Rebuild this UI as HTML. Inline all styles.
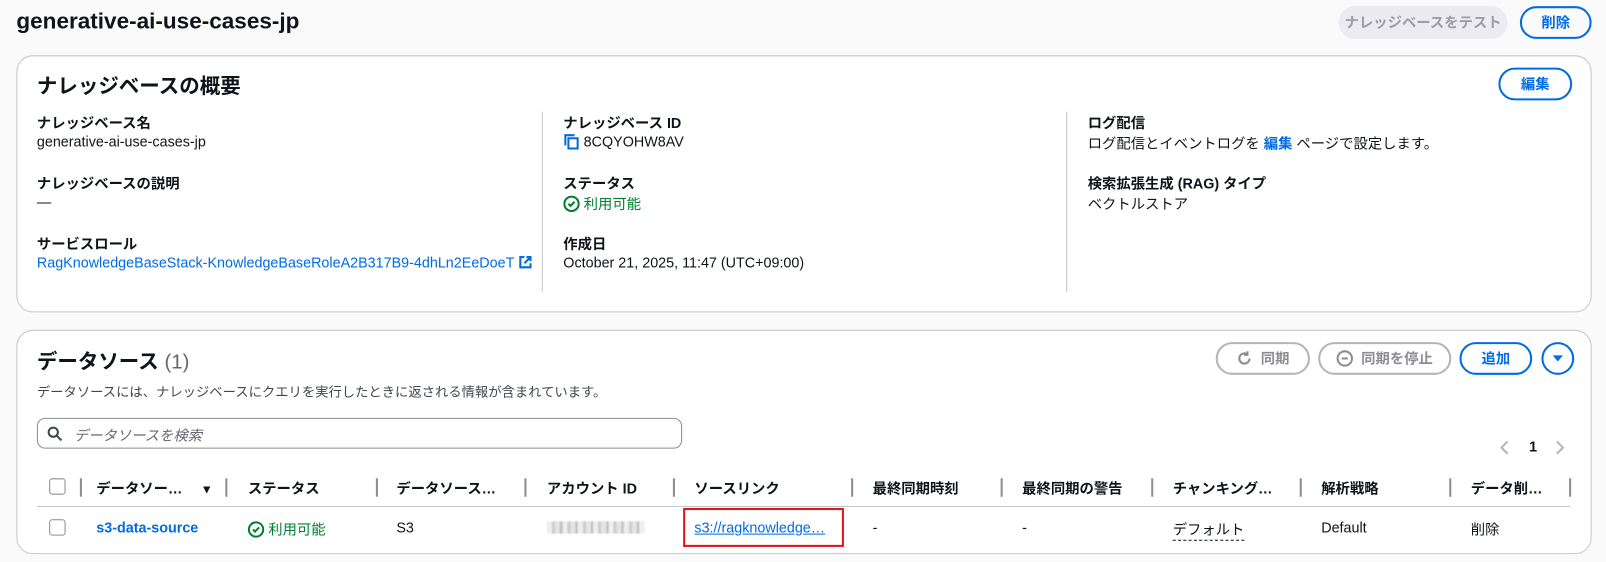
<!DOCTYPE html><html><head><meta charset="utf-8"><style>
body{margin:0;width:1606px;height:562px;background:#fafafa;font-family:"Liberation Sans","Noto Sans CJK JP",sans-serif;color:#0f141a;font-size:14px;position:relative;overflow:hidden}
#w{position:absolute;left:0;top:0;width:1568px;height:549px;transform:scale(1.0242);transform-origin:0 0}
.a{position:absolute;white-space:nowrap}
.card{position:absolute;background:#fff;border:1px solid #c6c6cd;border-radius:16px;box-sizing:border-box}
.b{font-weight:bold}
.lk{color:#006ce0}
.btn{position:absolute;border:2px solid #006ce0;border-radius:20px;box-sizing:border-box;color:#006ce0;font-weight:bold;font-size:14px;display:flex;align-items:center;justify-content:center}
.dis{border-color:#b4b4bb;color:#8c8c94}
.vl{position:absolute;width:1px;background:#c6c6cd}
.sep{position:absolute;width:2px;height:18px;background:#8c8c94;top:467px}
.g{color:#00802f}
</style></head><body><div id="w">
<div class="a b" style="left:16px;top:8px;font-size:22px">generative-ai-use-cases-jp</div>
<div class="btn dis" style="left:1307px;top:6px;width:165px;height:32px;background:#ebebf0;border-color:#ebebf0;color:#9c9ca4">ナレッジベースをテスト</div>
<div class="btn" style="left:1484px;top:6px;width:70px;height:32px">削除</div>

<div class="card" style="left:16px;top:54px;width:1538px;height:251px"></div>
<div class="a b" style="left:36px;top:68px;font-size:20px">ナレッジベースの概要</div>
<div class="btn" style="left:1463px;top:66px;width:72px;height:32px">編集</div>
<div class="vl" style="left:529px;top:109px;height:176px"></div>
<div class="vl" style="left:1041px;top:109px;height:176px"></div>
<div class="a b" style="left:36px;top:110px">ナレッジベース名</div>
<div class="a" style="left:36px;top:130px">generative-ai-use-cases-jp</div>
<div class="a b" style="left:36px;top:169px">ナレッジベースの説明</div>
<div class="a" style="left:36px;top:189px">—</div>
<div class="a b" style="left:36px;top:228px">サービスロール</div>
<div class="a lk" style="left:36px;top:248px">RagKnowledgeBaseStack-KnowledgeBaseRoleA2B317B9-4dhLn2EeDoeT <svg width="14" height="14" viewBox="0 0 14 14" style="vertical-align:-2px"><path d="M6 2H2v10h10V8M8 2h4v4M12 2L6 8" fill="none" stroke="#006ce0" stroke-width="2"/></svg></div>
<div class="a b" style="left:550px;top:110px">ナレッジベース ID</div>
<div class="a" style="left:550px;top:130px"><svg width="16" height="16" viewBox="0 0 16 16" style="vertical-align:-3px"><path d="M2 12V2h9M5 5h9v10H5z" fill="none" stroke="#006ce0" stroke-width="2"/></svg> 8CQYOHW8AV</div>
<div class="a b" style="left:550px;top:169px">ステータス</div>
<div class="a g" style="left:550px;top:189px"><svg width="16" height="16" viewBox="0 0 16 16" style="vertical-align:-3px"><circle cx="8" cy="8" r="7" fill="none" stroke="#00802f" stroke-width="2"/><path d="M5 8l2 2 4-4" fill="none" stroke="#00802f" stroke-width="2"/></svg> 利用可能</div>
<div class="a b" style="left:550px;top:228px">作成日</div>
<div class="a" style="left:550px;top:248px">October 21, 2025, 11:47 (UTC+09:00)</div>
<div class="a b" style="left:1062px;top:110px">ログ配信</div>
<div class="a" style="left:1062px;top:130px">ログ配信とイベントログを <span class="lk b">編集</span> ページで設定します。</div>
<div class="a b" style="left:1062px;top:169px">検索拡張生成 (RAG) タイプ</div>
<div class="a" style="left:1062px;top:189px">ベクトルストア</div>

<div class="card" style="left:16px;top:322px;width:1538px;height:219px"></div>
<div class="a" style="left:36px;top:337px;font-size:20px"><b>データソース</b> <span style="color:#656871">(1)</span></div>
<div class="a" style="left:36px;top:372px;font-size:13px;color:#424650">データソースには、ナレッジベースにクエリを実行したときに返される情報が含まれています。</div>
<div class="btn dis" style="left:1187px;top:334px;width:92px;height:32px"><svg width="16" height="16" viewBox="0 0 16 16" style="margin-right:8px"><path d="M13 8A5 5 0 1 1 11 4M11 1v3.5H7.5" fill="none" stroke="#8c8c94" stroke-width="2"/></svg>同期</div>
<div class="btn dis" style="left:1287px;top:334px;width:130px;height:32px"><span style="display:inline-block;width:12px;height:12px;border:2px solid #8c8c94;border-radius:50%;margin-right:8px;position:relative"><span style="position:absolute;left:3px;top:5px;width:6px;height:2px;background:#8c8c94"></span></span>同期を停止</div>
<div class="btn" style="left:1425px;top:334px;width:71px;height:32px">追加</div>
<div class="btn" style="left:1505px;top:334px;width:32px;height:32px"><svg width="12" height="10" viewBox="0 0 12 10"><path d="M1 2h10L6 8z" fill="#006ce0"/></svg></div>
<div class="a" style="left:36px;top:408px;width:630px;height:30px;border:1px solid #8c8c94;border-radius:8px;box-sizing:border-box"></div>
<svg class="a" style="left:46px;top:416px" width="15" height="15" viewBox="0 0 15 15"><circle cx="6" cy="6" r="4.5" fill="none" stroke="#424650" stroke-width="2"/><path d="M9.5 9.5L14 14" stroke="#424650" stroke-width="2"/></svg>
<div class="a" style="left:72px;top:415px;font-style:italic;color:#656871">データソースを検索</div>
<svg class="a" style="left:1464px;top:430px" width="10" height="14" viewBox="0 0 10 14"><path d="M8 1L2 7l6 6" fill="none" stroke="#b4b4bb" stroke-width="2"/></svg>
<div class="a b" style="left:1493px;top:428px">1</div>
<svg class="a" style="left:1518px;top:430px" width="10" height="14" viewBox="0 0 10 14"><path d="M2 1l6 6-6 6" fill="none" stroke="#b4b4bb" stroke-width="2"/></svg>
<div class="a" style="left:48px;top:467px;width:16px;height:16px;border:1px solid #8c8c94;border-radius:3px;box-sizing:border-box"></div>
<div class="sep" style="left:78px"></div>
<div class="a b" style="left:94px;top:467px">データソー… <span style="margin-left:14px;font-size:12px">▼</span></div>
<div class="sep" style="left:220px"></div><div class="a b" style="left:242px;top:467px">ステータス</div>
<div class="sep" style="left:367px"></div><div class="a b" style="left:387px;top:467px">データソース…</div>
<div class="sep" style="left:512px"></div><div class="a b" style="left:534px;top:467px">アカウント ID</div>
<div class="sep" style="left:657px"></div><div class="a b" style="left:678px;top:467px">ソースリンク</div>
<div class="sep" style="left:831px"></div><div class="a b" style="left:852px;top:467px">最終同期時刻</div>
<div class="sep" style="left:977px"></div><div class="a b" style="left:998px;top:467px">最終同期の警告</div>
<div class="sep" style="left:1124px"></div><div class="a b" style="left:1145px;top:467px">チャンキング…</div>
<div class="sep" style="left:1269px"></div><div class="a b" style="left:1290px;top:467px">解析戦略</div>
<div class="sep" style="left:1415px"></div><div class="a b" style="left:1436px;top:467px">データ削…</div>
<div class="sep" style="left:1532px"></div>
<div class="a" style="left:36px;top:494px;width:1497px;height:1px;background:#c6c6cd"></div>
<div class="a" style="left:48px;top:507px;width:16px;height:16px;border:1px solid #8c8c94;border-radius:3px;box-sizing:border-box"></div>
<div class="a b lk" style="left:94px;top:507px">s3-data-source</div>
<div class="a g" style="left:242px;top:507px"><svg width="16" height="16" viewBox="0 0 16 16" style="vertical-align:-3px"><circle cx="8" cy="8" r="7" fill="none" stroke="#00802f" stroke-width="2"/><path d="M5 8l2 2 4-4" fill="none" stroke="#00802f" stroke-width="2"/></svg> 利用可能</div>
<div class="a" style="left:387px;top:507px">S3</div>
<div class="a" style="left:534px;top:509px;width:95px;height:12px;background:repeating-linear-gradient(90deg,#eee 0 5px,#ccc 5px 8px,#e4e4e4 8px 13px,#bbb 13px 15px);filter:blur(0.8px)"></div>
<div class="a" style="left:667px;top:496px;width:157px;height:38px;border:2px solid #e0141e;box-sizing:border-box"></div>
<div class="a lk" style="left:678px;top:507px;text-decoration:underline">s3://ragknowledge…</div>
<div class="a" style="left:852px;top:507px">-</div>
<div class="a" style="left:998px;top:507px">-</div>
<div class="a" style="left:1145px;top:507px;border-bottom:1px dashed #0f141a">デフォルト</div>
<div class="a" style="left:1290px;top:507px">Default</div>
<div class="a" style="left:1436px;top:507px">削除</div>
</div></body></html>
